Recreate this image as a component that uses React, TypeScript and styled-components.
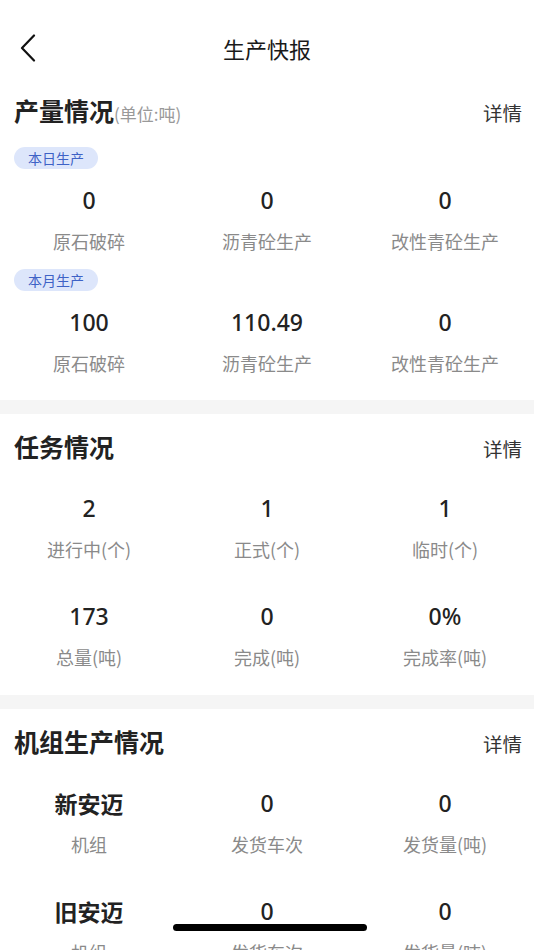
import React from "react";
import styled, { createGlobalStyle } from "styled-components";

const GlobalStyle = createGlobalStyle`
  html, body {
    margin: 0;
    padding: 0;
    background: #fff;
  }
  body {
    font-family: "Noto Sans CJK SC", "Noto Sans", sans-serif;
    color: #222;
    -webkit-font-smoothing: antialiased;
  }
`;

const Page = styled.div`
  width: 534px;
  min-height: 950px;
  background: #fff;
  overflow: hidden;
`;

const NavBar = styled.header`
  height: 56px;
  padding: 20px 0 10px;
  display: grid;
  grid-template-columns: 60px 1fr 60px;
  align-items: center;

  .back {
    padding-left: 20px;
    display: flex;
    align-items: center;
  }

  .title {
    text-align: center;
    font-size: 22px;
    color: #1a1a1a;
  }
`;

const Band = styled.div`
  height: 14px;
  background: #f5f5f5;
`;

const Section = styled.section<{ $top?: number; $bottom?: number }>`
  padding-top: ${(p) => p.$top ?? 7}px;
  padding-bottom: ${(p) => p.$bottom ?? 25}px;
`;

const SectionHead = styled.div`
  height: 48px;
  padding: 0 12px 0 14px;
  display: flex;
  align-items: center;
  justify-content: space-between;

  .name {
    font-size: 25px;
    font-weight: 700;
    color: #222;
  }

  .unit {
    font-size: 17px;
    font-weight: 400;
    color: #999;
  }

  .more {
    font-size: 19.5px;
    color: #333;
    padding-top: 4px;
  }
`;

const Tag = styled.span<{ $top: number }>`
  display: inline-flex;
  align-items: center;
  height: 22px;
  margin: ${(p) => p.$top}px 0 0 14px;
  padding: 0 14px;
  border-radius: 11px;
  background: #dde6fb;
  color: #3e62c6;
  font-size: 14px;
`;

const Grid = styled.div<{ $top: number }>`
  margin-top: ${(p) => p.$top}px;
  display: grid;
  grid-template-columns: repeat(3, 1fr);
  row-gap: 40px;
`;

const Cell = styled.div`
  display: flex;
  flex-direction: column;
  align-items: center;
  gap: 14px;
`;

const Value = styled.div<{ $name?: boolean }>`
  height: 30px;
  line-height: 30px;
  font-family: ${(p) =>
    p.$name ? '"Noto Sans CJK SC", sans-serif' : '"Noto Sans", "Noto Sans CJK SC", sans-serif'};
  font-size: 23px;
  font-weight: ${(p) => (p.$name ? 700 : 500)};
  color: #222;
`;

const Label = styled.div`
  height: 24px;
  line-height: 24px;
  font-size: 18px;
  color: #8a8a8a;
`;

const HomeBar = styled.div`
  position: fixed;
  left: 173px;
  top: 924px;
  width: 194px;
  height: 7px;
  border-radius: 4px;
  background: #000;
`;

type Stat = { value: string; label: string; name?: boolean };

function StatGrid({ items, top }: { items: Stat[]; top: number }) {
  return (
    <Grid $top={top}>
      {items.map((s, i) => (
        <Cell key={i}>
          <Value $name={s.name}>{s.value}</Value>
          <Label>{s.label}</Label>
        </Cell>
      ))}
    </Grid>
  );
}

function Head({ name, unit }: { name: string; unit?: string }) {
  return (
    <SectionHead>
      <div className="name">
        {name}
        {unit && <span className="unit">{unit}</span>}
      </div>
      <div className="more">详情</div>
    </SectionHead>
  );
}

const daily: Stat[] = [
  { value: "0", label: "原石破碎" },
  { value: "0", label: "沥青砼生产" },
  { value: "0", label: "改性青砼生产" },
];

const monthly: Stat[] = [
  { value: "100", label: "原石破碎" },
  { value: "110.49", label: "沥青砼生产" },
  { value: "0", label: "改性青砼生产" },
];

const tasks: Stat[] = [
  { value: "2", label: "进行中(个)" },
  { value: "1", label: "正式(个)" },
  { value: "1", label: "临时(个)" },
  { value: "173", label: "总量(吨)" },
  { value: "0", label: "完成(吨)" },
  { value: "0%", label: "完成率(吨)" },
];

const units: Stat[] = [
  { value: "新安迈", label: "机组", name: true },
  { value: "0", label: "发货车次" },
  { value: "0", label: "发货量(吨)" },
  { value: "旧安迈", label: "机组", name: true },
  { value: "0", label: "发货车次" },
  { value: "0", label: "发货量(吨)" },
];

export default function App() {
  return (
    <Page>
      <GlobalStyle />
      <NavBar>
        <div className="back">
          <svg width="16" height="28" viewBox="0 0 16 28" fill="none">
            <path d="M14 1.5L2 14l12 12.5" stroke="#111" strokeWidth="2.2" strokeLinecap="round" strokeLinejoin="round" />
          </svg>
        </div>
        <div className="title">生产快报</div>
        <div />
      </NavBar>

      <Section $top={0} $bottom={25}>
        <Head name="产量情况" unit="(单位:吨)" />
        <Tag $top={13}>本日生产</Tag>
        <StatGrid items={daily} top={16} />
        <Tag $top={16}>本月生产</Tag>
        <StatGrid items={monthly} top={16} />
      </Section>
      <Band />

      <Section $top={8} $bottom={26}>
        <Head name="任务情况" />
        <StatGrid items={tasks} top={23} />
      </Section>
      <Band />

      <Section $top={8}>
        <Head name="机组生产情况" />
        <StatGrid items={units} top={23} />
      </Section>

      <HomeBar />
    </Page>
  );
}
